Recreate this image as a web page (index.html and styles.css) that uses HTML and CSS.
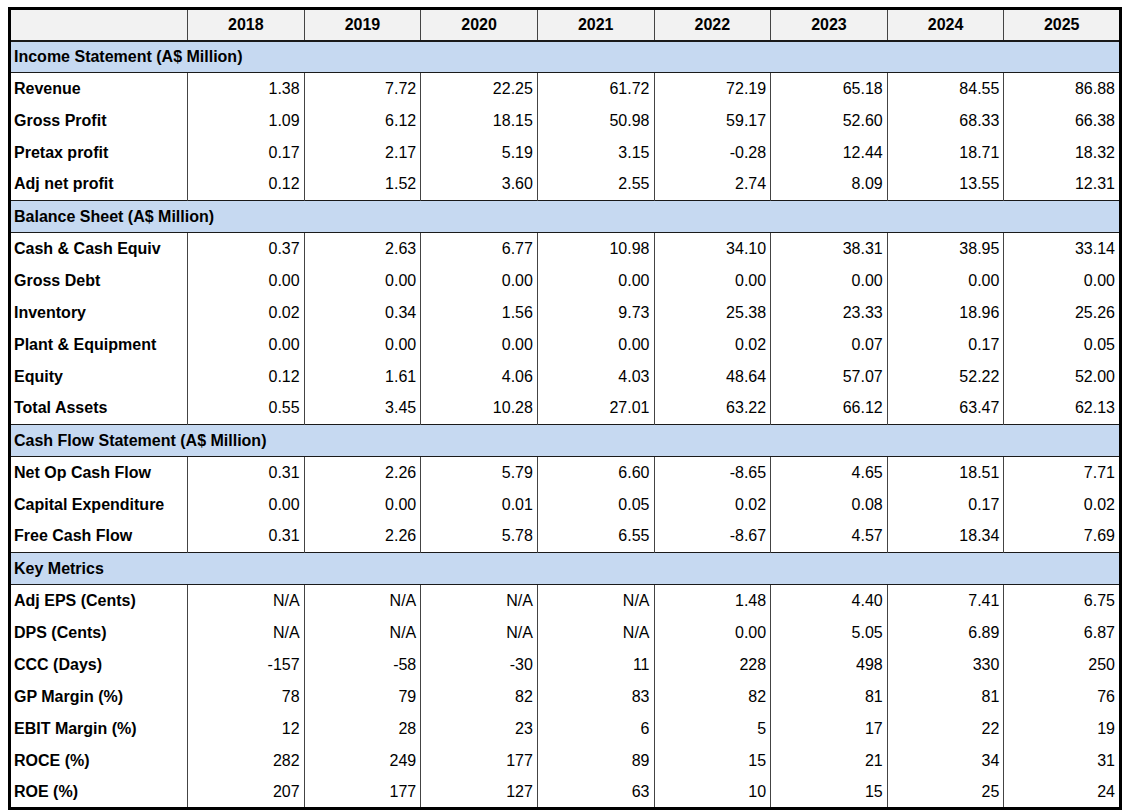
FILE: index.html
```html
<!DOCTYPE html>
<html>
<head>
<meta charset="utf-8">
<link rel="stylesheet" href="styles.css">
</head>
<body>
<table class="fin">
  <colgroup>
    <col class="c-label">
    <col><col><col><col><col><col><col><col>
  </colgroup>
  <thead>
    <tr class="head">
      <th></th><th>2018</th><th>2019</th><th>2020</th><th>2021</th><th>2022</th><th>2023</th><th>2024</th><th>2025</th>
    </tr>
  </thead>
  <tbody>
    <tr class="sec"><td colspan="9">Income Statement (A$ Million)</td></tr>
    <tr><th>Revenue</th><td>1.38</td><td>7.72</td><td>22.25</td><td>61.72</td><td>72.19</td><td>65.18</td><td>84.55</td><td>86.88</td></tr>
    <tr><th>Gross Profit</th><td>1.09</td><td>6.12</td><td>18.15</td><td>50.98</td><td>59.17</td><td>52.60</td><td>68.33</td><td>66.38</td></tr>
    <tr><th>Pretax profit</th><td>0.17</td><td>2.17</td><td>5.19</td><td>3.15</td><td>-0.28</td><td>12.44</td><td>18.71</td><td>18.32</td></tr>
    <tr><th>Adj net profit</th><td>0.12</td><td>1.52</td><td>3.60</td><td>2.55</td><td>2.74</td><td>8.09</td><td>13.55</td><td>12.31</td></tr>
    <tr class="sec"><td colspan="9">Balance Sheet (A$ Million)</td></tr>
    <tr><th>Cash &amp; Cash Equiv</th><td>0.37</td><td>2.63</td><td>6.77</td><td>10.98</td><td>34.10</td><td>38.31</td><td>38.95</td><td>33.14</td></tr>
    <tr><th>Gross Debt</th><td>0.00</td><td>0.00</td><td>0.00</td><td>0.00</td><td>0.00</td><td>0.00</td><td>0.00</td><td>0.00</td></tr>
    <tr><th>Inventory</th><td>0.02</td><td>0.34</td><td>1.56</td><td>9.73</td><td>25.38</td><td>23.33</td><td>18.96</td><td>25.26</td></tr>
    <tr><th>Plant &amp; Equipment</th><td>0.00</td><td>0.00</td><td>0.00</td><td>0.00</td><td>0.02</td><td>0.07</td><td>0.17</td><td>0.05</td></tr>
    <tr><th>Equity</th><td>0.12</td><td>1.61</td><td>4.06</td><td>4.03</td><td>48.64</td><td>57.07</td><td>52.22</td><td>52.00</td></tr>
    <tr><th>Total Assets</th><td>0.55</td><td>3.45</td><td>10.28</td><td>27.01</td><td>63.22</td><td>66.12</td><td>63.47</td><td>62.13</td></tr>
    <tr class="sec"><td colspan="9">Cash Flow Statement (A$ Million)</td></tr>
    <tr><th>Net Op Cash Flow</th><td>0.31</td><td>2.26</td><td>5.79</td><td>6.60</td><td>-8.65</td><td>4.65</td><td>18.51</td><td>7.71</td></tr>
    <tr><th>Capital Expenditure</th><td>0.00</td><td>0.00</td><td>0.01</td><td>0.05</td><td>0.02</td><td>0.08</td><td>0.17</td><td>0.02</td></tr>
    <tr><th>Free Cash Flow</th><td>0.31</td><td>2.26</td><td>5.78</td><td>6.55</td><td>-8.67</td><td>4.57</td><td>18.34</td><td>7.69</td></tr>
    <tr class="sec"><td colspan="9">Key Metrics</td></tr>
    <tr><th>Adj EPS (Cents)</th><td>N/A</td><td>N/A</td><td>N/A</td><td>N/A</td><td>1.48</td><td>4.40</td><td>7.41</td><td>6.75</td></tr>
    <tr><th>DPS (Cents)</th><td>N/A</td><td>N/A</td><td>N/A</td><td>N/A</td><td>0.00</td><td>5.05</td><td>6.89</td><td>6.87</td></tr>
    <tr><th>CCC (Days)</th><td>-157</td><td>-58</td><td>-30</td><td>11</td><td>228</td><td>498</td><td>330</td><td>250</td></tr>
    <tr><th>GP Margin (%)</th><td>78</td><td>79</td><td>82</td><td>83</td><td>82</td><td>81</td><td>81</td><td>76</td></tr>
    <tr><th>EBIT Margin (%)</th><td>12</td><td>28</td><td>23</td><td>6</td><td>5</td><td>17</td><td>22</td><td>19</td></tr>
    <tr><th>ROCE (%)</th><td>282</td><td>249</td><td>177</td><td>89</td><td>15</td><td>21</td><td>34</td><td>31</td></tr>
    <tr><th>ROE (%)</th><td>207</td><td>177</td><td>127</td><td>63</td><td>10</td><td>15</td><td>25</td><td>24</td></tr>
  </tbody>
</table>
</body>
</html>
```

FILE: styles.css
```css
html, body {
  background: #ffffff;
}
body {
  margin: 7px 0 0 8px;
  font-family: "Liberation Sans", Arial, sans-serif;
  font-size: 16px;
  color: #000000;
}
.fin {
  border-collapse: collapse;
  table-layout: fixed;
  width: 1114px;
  border: 3px solid #000000;
}
.c-label {
  width: 178px;
}
.fin tr {
  height: 32px;
}
.fin th,
.fin td {
  padding: 0 4px 0 4px;
  line-height: 18px;
  white-space: nowrap;
  border-left: 1px solid #444444;
  border-right: 1px solid #444444;
}
.fin td {
  text-align: right;
  font-weight: normal;
}
.fin tbody th {
  text-align: left;
  font-weight: bold;
  padding-left: 3px;
}
.head th {
  background: #f2f2f2;
  text-align: center;
  font-weight: bold;
  border-bottom: 2px solid #1a1a1a;
}
.sec td {
  background: #c6d9f1;
  text-align: left;
  font-weight: bold;
  padding-left: 3px;
  border-top: 1px solid #1a1a1a;
  border-bottom: 1px solid #1a1a1a;
}
```
